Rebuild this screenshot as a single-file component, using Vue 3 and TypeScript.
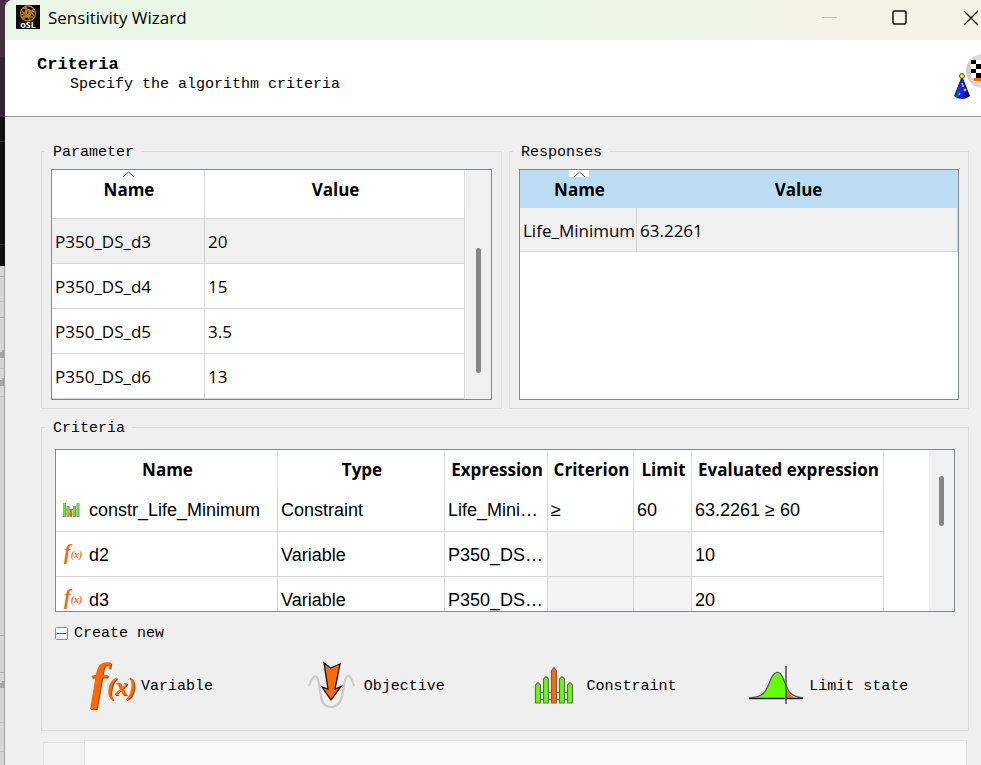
<script setup lang="ts">
import { ref } from 'vue'

interface Parameter { name: string; value: string }
interface Criterion {
  kind: 'constraint' | 'variable'
  name: string
  type: string
  expression: string
  criterion: string
  limit: string
  evaluated: string
}

const parameters: Parameter[] = [
  { name: 'P350_DS_d3', value: '20' },
  { name: 'P350_DS_d4', value: '15' },
  { name: 'P350_DS_d5', value: '3.5' },
  { name: 'P350_DS_d6', value: '13' },
]
const responses: Parameter[] = [{ name: 'Life_Minimum', value: '63.2261' }]
const criteria: Criterion[] = [
  { kind: 'constraint', name: 'constr_Life_Minimum', type: 'Constraint', expression: 'Life_Mini…', criterion: '≥', limit: '60', evaluated: '63.2261 ≥ 60' },
  { kind: 'variable', name: 'd2', type: 'Variable', expression: 'P350_DS…', criterion: '', limit: '', evaluated: '10' },
  { kind: 'variable', name: 'd3', type: 'Variable', expression: 'P350_DS…', criterion: '', limit: '', evaluated: '20' },
]
const selected = ref(0)
const createOpen = ref(true)
</script>

<template>
  <div class="desktop">
    <svg class="behind" width="5" height="765" aria-hidden="true">
      <rect width="5" height="765" fill="#d6d6d6" />
      <rect width="5" height="57" fill="#44313f" />
      <rect y="57" width="5" height="60" fill="#302530" />
      <rect y="117" width="5" height="149" fill="#111" />
      <path d="M0 141.500H5M0 244.500H5" stroke="#303030" />
      <path d="M0 276.500H5M0 317.500H5M0 635.500H5M0 672.500H5" stroke="#a9a9a9" />
      <path d="M0 301.500H5M0 368.500H5M0 396.500H5M0 722.500H5M0 751.500H5" stroke="#c4c4c4" />
      <path d="M1 352V358M3 350V358M1 380V386M3 378V386M1 683V688M3 681V688" stroke="#777" />
      <rect x="4" y="266" width="1" height="499" fill="#a3a3a3" />
    </svg>
    <main class="window">
      <header class="titlebar">
        <svg class="app-icon" width="24" height="24" viewBox="0 0 24 24" aria-hidden="true">
          <rect width="24" height="24" fill="#080808" />
          <g fill="none" stroke="#b98218" stroke-width="1.300">
            <circle cx="12" cy="8.500" r="7.500" />
            <path d="M5 5Q9 8 8 14M7 3Q15 4 18 11M5 10Q12 5 19 7M10 1Q9 8 14 15M9 12L18 4M6 12H17" />
            <circle cx="12" cy="8" r="3" />
          </g>
          <text x="12" y="23" text-anchor="middle" class="logo-text">oSL</text>
        </svg>
        <span class="title">Sensitivity Wizard</span>
        <button class="control" aria-label="Minimize">
          <svg width="16" height="16"><path d="M0 7.500H15" stroke="#bdbdb4" /></svg>
        </button>
        <button class="control" aria-label="Maximize">
          <svg width="16" height="16"><rect x="1" y="1" width="13" height="13" rx="1.500" fill="none" stroke="#111" stroke-width="1.500" /></svg>
        </button>
        <button class="control close" aria-label="Close">
          <svg width="16" height="16"><path d="M1 1L15 15M15 1L1 15" stroke="#111" stroke-width="1.300" /></svg>
        </button>
      </header>

      <section class="intro">
        <div>
          <h1>Criteria</h1>
          <p>Specify the algorithm criteria</p>
        </div>
        <svg class="wizard" width="28" height="48" viewBox="0 0 28 48" aria-hidden="true">
          <defs>
            <linearGradient id="disc"><stop offset="0" stop-color="#ccc" /><stop offset="1" stop-color="#f5f5f5" /></linearGradient>
            <linearGradient id="hat"><stop offset="0" stop-color="#06b" /><stop offset=".5" stop-color="#12f" /><stop offset="1" stop-color="#008" /></linearGradient>
          </defs>
          <circle cx="30" cy="18" r="17" fill="url(#disc)" />
          <rect x="18" y="7" width="10" height="18" fill="#fff" />
          <path d="M18 7h5v4h-5zM23 11h5v5h-5zM18 16h5v4h-5zM23 20h5v5h-5z" fill="#000" />
          <path d="M21 26.500H28" stroke="#f60" stroke-width="3" />
          <path d="M9 24L16.500 43Q9 48 1.500 43Z" fill="url(#hat)" stroke="#114" />
          <path d="M9 30l1 2M7 40l-1 2M11 36l2 2M13 36l-2 2M9 33h2" stroke="#ecc45a" stroke-width="1.400" />
          <circle cx="9" cy="23" r="2.400" fill="#ff0" stroke="#333" />
        </svg>
      </section>

      <div class="content">
        <div class="pair">
          <fieldset>
            <legend><span>Parameter</span></legend>
            <div class="frame tall">
              <div class="viewport">
                <table class="ui parameters">
                  <colgroup><col class="c-param"><col></colgroup>
                  <thead>
                    <tr>
                      <th><svg class="sort" width="20" height="7"><path d="M5 7L10.500 2L16 7" fill="none" stroke="#555" /></svg>Name</th>
                      <th>Value</th>
                    </tr>
                  </thead>
                  <tbody>
                    <tr class="partial" aria-hidden="true"><td></td><td></td></tr>
                    <tr v-for="(p, i) in parameters" :key="p.name" :class="{ selected: selected === i }" @click="selected = i">
                      <td>{{ p.name }}</td><td>{{ p.value }}</td>
                    </tr>
                  </tbody>
                </table>
              </div>
              <div class="scroll"><i class="thumb low"></i></div>
            </div>
          </fieldset>
          <fieldset>
            <legend><span>Responses</span></legend>
            <div class="frame tall">
              <div class="viewport flush">
                <table class="ui responses">
                  <colgroup><col class="c-response"><col></colgroup>
                  <thead>
                    <tr>
                      <th><svg class="sort" width="20" height="7"><path d="M5 7L10.500 2L16 7" fill="none" stroke="#555" /></svg>Name</th>
                      <th>Value</th>
                    </tr>
                  </thead>
                  <tbody>
                    <tr v-for="r in responses" :key="r.name" class="selected first">
                      <td>{{ r.name }}</td><td>{{ r.value }}</td>
                    </tr>
                  </tbody>
                </table>
              </div>
            </div>
          </fieldset>
        </div>

        <fieldset class="criteria">
          <legend><span>Criteria</span></legend>
          <div class="frame short">
            <div class="viewport flush">
              <table class="criteria-table">
                <colgroup>
                  <col class="c-name"><col class="c-type"><col class="c-expr"><col class="c-crit"><col class="c-limit"><col class="c-eval">
                </colgroup>
                <thead>
                  <tr><th>Name</th><th>Type</th><th>Expression</th><th>Criterion</th><th>Limit</th><th>Evaluated expression</th></tr>
                </thead>
                <tbody>
                  <tr v-for="(c, i) in criteria" :key="c.name" :class="{ first: i === 0 }">
                    <td>
                      <div class="named">
                        <svg v-if="c.kind === 'constraint'" width="18" height="18" viewBox="0 0 18 18" aria-hidden="true">
                          <path d="M1 8.500H17M1 13H17" stroke="#888" />
                          <path d="M2.500 2V16M6 5V16M12.500 5V16M16 2V16" stroke="#888" stroke-width="3" />
                          <path d="M2.200 2V15M5.800 6V15M12.200 6V15M15.700 2V15" stroke="#6e2" stroke-width="2" />
                          <path d="M9 8V16" stroke="#e8671c" stroke-width="2.500" />
                        </svg>
                        <svg v-else width="18" height="20" viewBox="0 0 18 20" aria-hidden="true">
                          <text x="2" y="14" class="fx" font-size="20">f<tspan font-size="10" dy="-1">(x)</tspan></text>
                        </svg>
                        <span>{{ c.name }}</span>
                      </div>
                    </td>
                    <td>{{ c.type }}</td>
                    <td>{{ c.expression }}</td>
                    <td :class="{ off: !c.criterion }">{{ c.criterion }}</td>
                    <td :class="{ off: !c.limit }">{{ c.limit }}</td>
                    <td>{{ c.evaluated }}</td>
                  </tr>
                </tbody>
              </table>
            </div>
            <div class="scroll"><i class="thumb high"></i></div>
          </div>

          <button class="toggle" :aria-expanded="createOpen" @click="createOpen = !createOpen">
            <svg width="13" height="13" aria-hidden="true">
              <rect x=".5" y=".5" width="12" height="12" rx="1" fill="#f4f4f4" stroke="#8e8e8e" />
              <path d="M2 6.500H11" stroke="#3c5eaa" />
              <path v-if="!createOpen" d="M6.500 2V11" stroke="#3c5eaa" />
            </svg>
            <span>Create new</span>
          </button>
          <div v-show="createOpen" class="create">
            <button>
              <svg width="58" height="54" viewBox="0 0 58 54" aria-hidden="true">
                <text x="10" y="39" class="fx large" font-size="51">f<tspan font-size="25" dy="-3">(x)</tspan></text>
              </svg>
              <span>Variable</span>
            </button>
            <button>
              <svg width="58" height="54" viewBox="0 0 58 54" aria-hidden="true">
                <path d="M6 27C10 15 14 14 16 25C18 41 19 48 28 48S39 40 41 26C43 13 47 14 51 27" fill="none" stroke="#cbcbcb" stroke-width="2.200" />
                <path d="M21 4L27.500 9L37 5L32 30L38 27.500L28 41L19 28L25 30Z" fill="#ff6a00" stroke="#111" stroke-width="1.300" />
              </svg>
              <span>Objective</span>
            </button>
            <button>
              <svg width="58" height="54" viewBox="0 0 58 54" aria-hidden="true">
                <path d="M10 33.500H47M10 40.500H47" stroke="#777" stroke-width="1.300" />
                <g fill="#6f0" stroke="#666" stroke-width="1.200">
                  <path d="M9.500 44V26L12 23.500L14.500 26V44ZM17.500 44V20L20 17.500L22.500 20V44ZM33.500 44V20L36 17.500L38.500 20V44ZM41.500 44V26L44 23.500L46.500 26V44Z" />
                  <path d="M25.500 44V12L28 8.500L30.500 12V44Z" fill="#ff6a00" />
                </g>
              </svg>
              <span>Constraint</span>
            </button>
            <button>
              <svg width="58" height="54" viewBox="0 0 58 54" aria-hidden="true">
                <path d="M4 39C17 38 18 32 22 22C27 10 32 12 35 19Q37 23 38 28V39Z" fill="#6f0" />
                <path d="M38 28Q42 38 48 39H38Z" fill="#ff6a00" />
                <path d="M1 39C17 38 18 32 22 22C27 10 32 12 35 19C40 32 41 37 55 39" fill="none" stroke="#555" stroke-width="1.300" />
                <path d="M1 39.500H55" stroke="#222" stroke-width="1.300" />
                <path d="M38 7V45" stroke="#444" stroke-width="1.400" />
              </svg>
              <span>Limit state</span>
            </button>
          </div>
        </fieldset>

        <div class="bottom">
          <div class="gutter"></div>
          <div class="sheet"></div>
        </div>
      </div>
    </main>
  </div>
</template>

<style>
body { margin: 0; }
</style>

<style scoped>
* { box-sizing: border-box; }
.desktop {
  display: flex;
  height: 100vh;
  overflow: hidden;
  background: #44313f;
  color: #000;
  font: 15px/20px "Liberation Mono", monospace;
}
svg { overflow: visible; }
.behind { flex: none; }
.window {
  flex: 1;
  min-width: 0;
  background: #efefef;
  border-top-left-radius: 8px;
  overflow: hidden;
}
button {
  border: 0;
  padding: 0;
  margin: 0;
  background: none;
  color: inherit;
  font: inherit;
}
.titlebar {
  display: flex;
  align-items: center;
  height: 40px;
  padding-left: 11px;
  background: linear-gradient(90deg, #e9f6e6 0%, #eaf8e6 55%, #f6f2e5 90%);
}
.app-icon { margin-top: -6px; }
.logo-text { font: bold 9px "Open Sans", sans-serif; fill: #fff; }
.title {
  flex: 1;
  padding-left: 8px;
  padding-bottom: 4px;
  font: 17px/24px "Open Sans", sans-serif;
}
.control {
  display: flex;
  align-items: center;
  justify-content: center;
  width: 70px;
  height: 40px;
  padding-bottom: 4px;
}
.control.close {
  width: 46px;
  padding-left: 28px;
  justify-content: flex-start;
}
.control svg { flex: none; }
.intro {
  display: flex;
  justify-content: space-between;
  height: 77px;
  padding: 13px 0 0 32px;
  background: #fff;
  border-bottom: 1px solid #9c9c9c;
}
.intro h1 { margin: 2px 0 0; font-size: 17px; line-height: 20px; }
.intro p { margin: 0 0 0 33px; }
.wizard { overflow: hidden; }
.content { padding: 24px 12px 0 36px; }
.pair {
  display: grid;
  grid-template-columns: 461fr 460fr;
  gap: 7px;
}
fieldset {
  min-width: 0;
  margin: 0;
  padding: 8px 9px;
  border: 1px solid #dcdcdc;
}
legend {
  height: 20px;
  margin-left: -6px;
  padding: 0 7px 0 8px;
}
legend span, .toggle span, .create span {
  display: block;
  padding-top: 2px;
}
.frame {
  display: flex;
  overflow: hidden;
  border: 1px solid #828790;
  background: #fff;
}
.tall { height: 231px; }
.short { height: 163px; }
.viewport { flex: 1; min-width: 0; padding-right: 1px; }
.viewport.flush { padding-right: 0; }
.scroll {
  flex: none;
  width: 25px;
  padding-left: 10px;
  background: #f0f0f0;
}
.thumb {
  display: block;
  width: 5px;
  border-radius: 3px;
  background: #868686;
}
.thumb.low { height: 125px; margin-top: 78px; }
.thumb.high { height: 50px; margin-top: 26px; }
table {
  table-layout: fixed;
  border-collapse: separate;
  border-spacing: 0;
}
th {
  position: relative;
  height: 38px;
  padding: 2px 0 0 2px;
  border-right: 1px solid #e5e5e5;
  font: bold 17px/24px "Open Sans", sans-serif;
  white-space: nowrap;
}
td {
  height: 45px;
  padding: 2px 0 0 3px;
  border-right: 1px solid #d5d5d5;
  border-bottom: 1px solid #d5d5d5;
  white-space: nowrap;
  overflow: hidden;
}
.first td { height: 44px; }
.ui { width: 100%; }
.ui td { font: 17px/24px "Open Sans", sans-serif; }
.ui .partial td { height: 11px; padding: 0; line-height: 8px; }
.selected td { background: #f0f0f0; }
.responses th { background: #bbdcf3; border: 0; }
.responses .sort { background: #fff; }
.sort {
  position: absolute;
  top: 0;
  left: calc(50% - 10px);
}
.criteria-table { width: 828px; }
.criteria-table td { font: 18px/24px "Liberation Sans", Arial, sans-serif; padding-top: 1px; }
.criteria-table .off { background: #f4f4f4; }
.c-param { width: 153px; }
.c-response { width: 117px; }
.c-name { width: 222px; }
.c-type { width: 167px; }
.c-expr { width: 103px; }
.c-crit { width: 86px; }
.c-limit { width: 58px; }
.c-eval { width: 192px; }
.named {
  display: flex;
  align-items: center;
  gap: 9px;
  padding-left: 3px;
}
.fx {
  fill: #f26a13;
  font-family: "Liberation Serif", serif;
  font-style: italic;
  font-weight: bold;
}
.fx.large { fill: #ff6a00; filter: drop-shadow(1px 1px 0 #a64400); }
.criteria { margin-top: 8px; padding: 12px 13px 0; }
.criteria legend { margin-left: -10px; }
.toggle {
  display: flex;
  align-items: center;
  gap: 6px;
  margin-top: 10px;
}
.create {
  display: grid;
  grid-template-columns: repeat(4, 1fr);
  margin: 15px -16px 0 25px;
  padding-bottom: 17px;
}
.create button {
  display: flex;
  align-items: center;
  gap: 3px;
  white-space: nowrap;
}
.bottom {
  display: flex;
  align-items: flex-end;
  padding: 9px 2px 0;
}
.gutter { width: 41px; height: 50px; border: 1px solid #e2e2e2; border-right: 0; background: #f3f3f3; }
.sheet { flex: 1; height: 52px; border: 1px solid #e2e2e2; background: #f9f9f9; }
</style>
